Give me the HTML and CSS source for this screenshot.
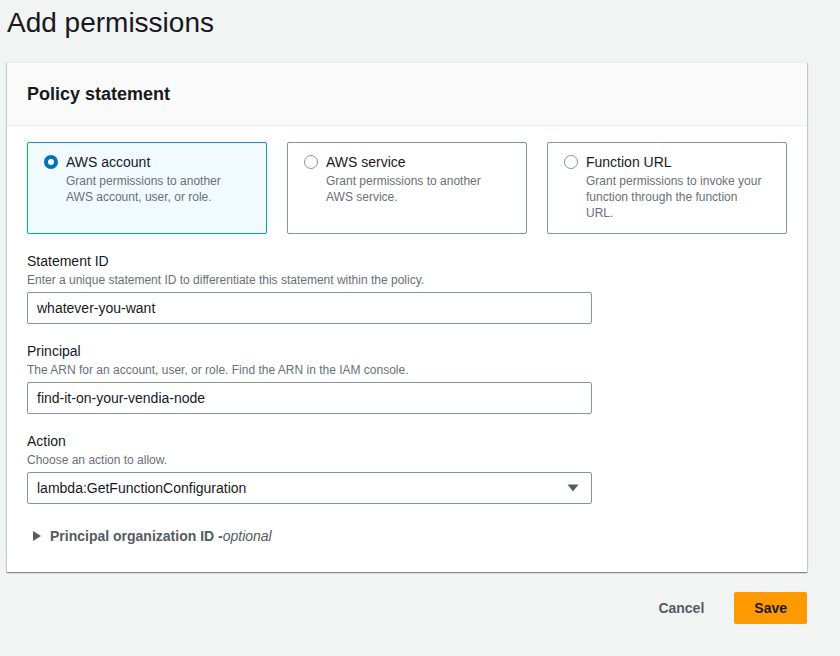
FILE: index.html
```html
<!DOCTYPE html>
<html lang="en">
<head>
<meta charset="utf-8">
<title>Add permissions</title>
<link rel="stylesheet" href="styles.css">
</head>
<body>
<main class="page">
  <h1 class="title">Add permissions</h1>
  <section class="card">
    <header class="card-header">
      <h2 class="card-title">Policy statement</h2>
    </header>
    <div class="card-body">
      <div class="tiles">
        <label class="tile tile-selected">
          <span class="radio radio-on"></span>
          <span class="tile-text">
            <span class="tile-label">AWS account</span>
            <span class="tile-desc">Grant permissions to another AWS account, user, or role.</span>
          </span>
        </label>
        <label class="tile">
          <span class="radio"></span>
          <span class="tile-text">
            <span class="tile-label">AWS service</span>
            <span class="tile-desc">Grant permissions to another AWS service.</span>
          </span>
        </label>
        <label class="tile">
          <span class="radio"></span>
          <span class="tile-text">
            <span class="tile-label">Function URL</span>
            <span class="tile-desc">Grant permissions to invoke your function through the function URL.</span>
          </span>
        </label>
      </div>

      <div class="field">
        <div class="field-label">Statement ID</div>
        <div class="field-desc">Enter a unique statement ID to differentiate this statement within the policy.</div>
        <div class="input">whatever-you-want</div>
      </div>

      <div class="field">
        <div class="field-label">Principal</div>
        <div class="field-desc">The ARN for an account, user, or role. Find the ARN in the IAM console.</div>
        <div class="input">find-it-on-your-vendia-node</div>
      </div>

      <div class="field">
        <div class="field-label">Action</div>
        <div class="field-desc">Choose an action to allow.</div>
        <div class="input select">
          <span>lambda:GetFunctionConfiguration</span>
          <svg class="caret" width="12" height="8" viewBox="0 0 12 8"><path d="M0.5 0.5 H11.5 L6 7.5 Z" fill="#545b64"/></svg>
        </div>
      </div>

      <div class="expander">
        <svg class="expander-icon" width="8" height="10" viewBox="0 0 8 10"><path d="M0 0 L8 5 L0 10 Z" fill="#545b64"/></svg>
        <span class="expander-text">Principal organization ID -<em>optional</em></span>
      </div>
    </div>
  </section>

  <div class="actions">
    <button class="btn btn-link">Cancel</button>
    <button class="btn btn-primary">Save</button>
  </div>
</main>
</body>
</html>
```

FILE: styles.css
```css
* { box-sizing: border-box; }
html, body {
  margin: 0;
  padding: 0;
  background: #f2f3f3;
  font-family: "Liberation Sans", Arial, sans-serif;
  color: #16191f;
}
.page {
  padding: 5px 33px 0 7px;
}
.title {
  margin: 0;
  font-size: 28px;
  line-height: 36px;
  font-weight: 400;
  color: #16191f;
}
.card {
  margin-top: 21px;
  background: #fff;
  border-top: 1px solid #eaeded;
  box-shadow: 0 1px 1px 0 rgba(0,28,36,.3), 1px 1px 1px 0 rgba(0,28,36,.15), -1px 1px 1px 0 rgba(0,28,36,.15);
}
.card-header {
  background: #fafafa;
  border-bottom: 1px solid #eaeded;
  padding: 20px;
}
.card-title {
  margin: 0;
  font-size: 18px;
  line-height: 22px;
  font-weight: 700;
  color: #16191f;
}
.card-body {
  padding: 16px 20px 25px;
}
.tiles {
  display: grid;
  grid-template-columns: repeat(3, 1fr);
  gap: 20px;
}
.tile {
  display: flex;
  gap: 8px;
  align-items: flex-start;
  border: 1px solid #879596;
  border-radius: 2px;
  padding: 8px 20px 12px 16px;
  background: #fff;
}
.tile-selected {
  background: #f1faff;
  border-color: #00a1c9;
}
.radio {
  flex: none;
  width: 14px;
  height: 14px;
  margin-top: 4px;
  border-radius: 50%;
  border: 1px solid #879596;
  background: #fff;
}
.radio-on {
  border: 4px solid #0073bb;
}
.tile-text {
  display: flex;
  flex-direction: column;
}
.tile-label {
  font-size: 14px;
  line-height: 22px;
  color: #16191f;
}
.tile-desc {
  font-size: 12px;
  line-height: 16px;
  color: #687078;
}
.field {
  margin-top: 16px;
}
.field-label {
  font-size: 14px;
  line-height: 22px;
  color: #16191f;
}
.field-desc {
  font-size: 12px;
  line-height: 16px;
  color: #687078;
  margin-bottom: 4px;
}
.input {
  width: 565px;
  height: 32px;
  border: 1px solid #879596;
  border-radius: 2px;
  padding: 0 9px;
  display: flex;
  align-items: center;
  font-size: 14px;
  color: #16191f;
  background: #fff;
}
.select {
  justify-content: space-between;
  padding-right: 12px;
}
.caret {
  display: block;
}
.expander {
  margin-top: 21px;
  display: flex;
  align-items: center;
  gap: 9px;
  padding-left: 6px;
  height: 22px;
}
.expander-icon {
  display: block;
}
.expander-text {
  font-size: 14px;
  line-height: 22px;
  font-weight: 700;
  color: #545b64;
}
.expander-text em {
  font-weight: 400;
  font-style: italic;
}
.actions {
  margin-top: 20px;
  display: flex;
  justify-content: flex-end;
  gap: 9px;
}
.btn {
  font-family: inherit;
  font-size: 14px;
  font-weight: 700;
  height: 32px;
  line-height: 20px;
  border-radius: 2px;
  border: 1px solid transparent;
  padding: 0 20px;
  cursor: pointer;
}
.btn-link {
  background: transparent;
  color: #545b64;
}
.btn-primary {
  background: #ff9900;
  border-color: #ff9900;
  color: #16191f;
  padding: 0 19px;
}
```
